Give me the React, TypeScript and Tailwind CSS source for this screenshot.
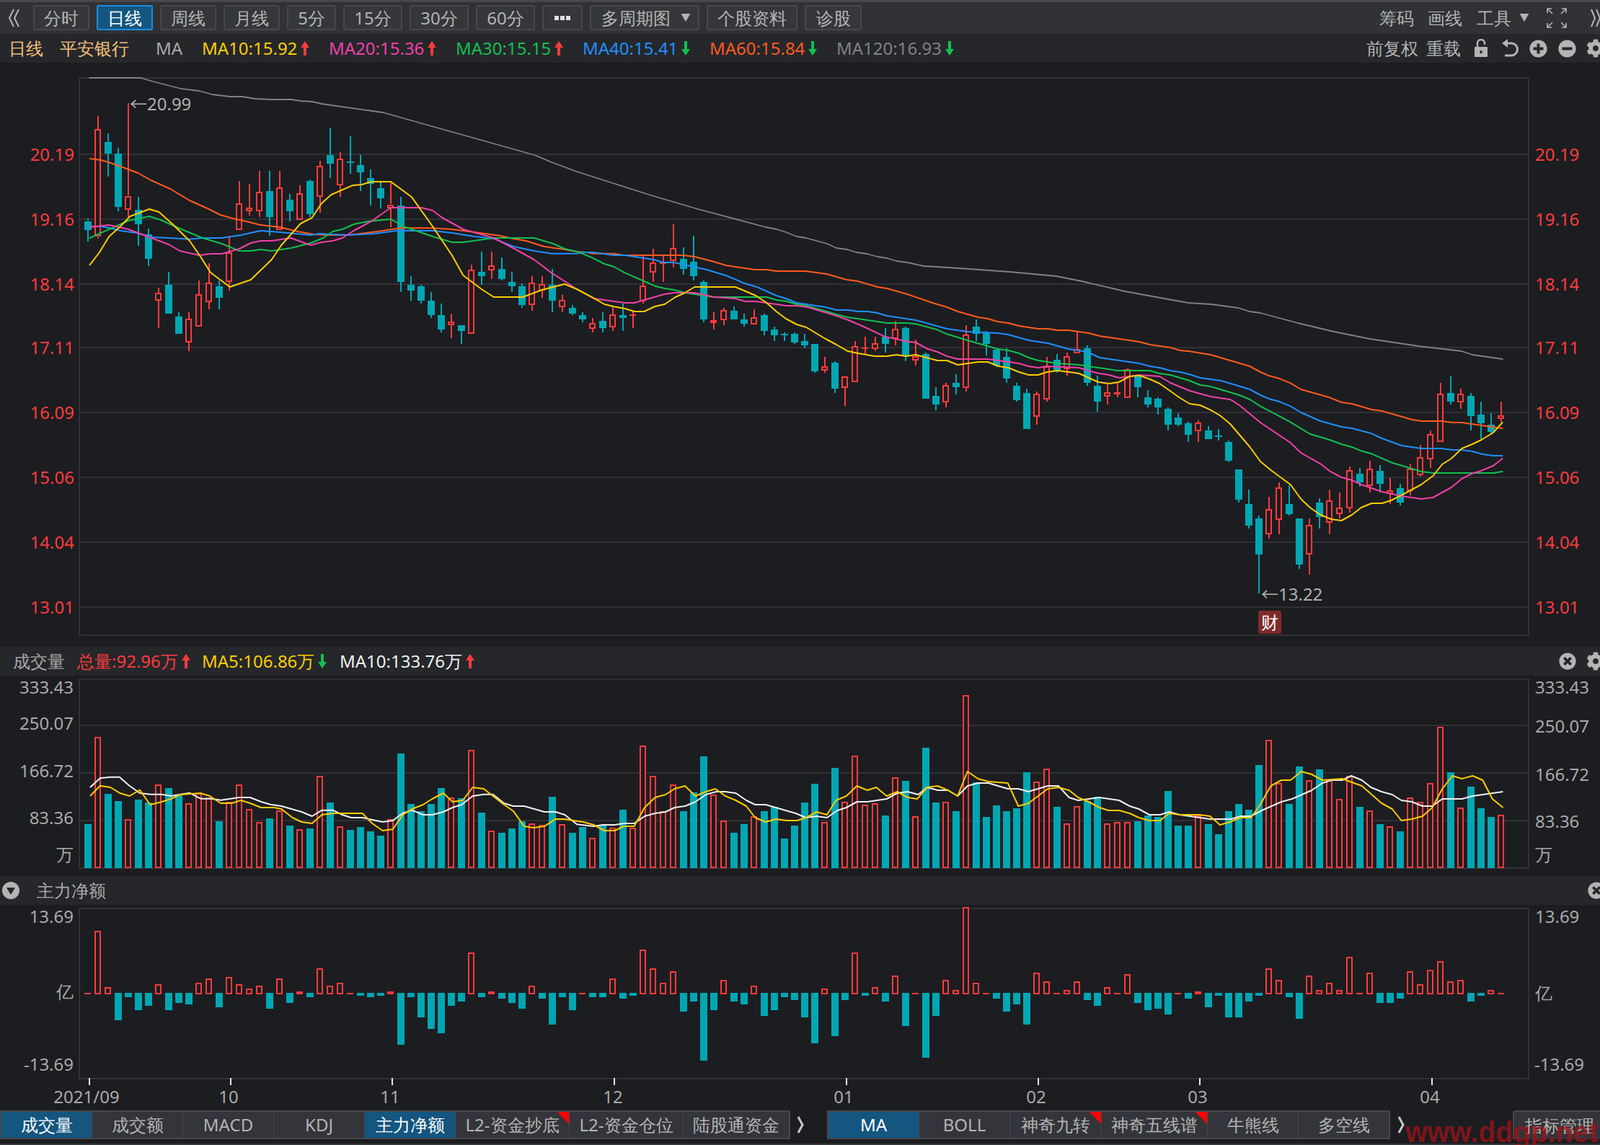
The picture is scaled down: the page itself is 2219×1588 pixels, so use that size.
import React from 'react';
import { FaCog, FaPlusCircle, FaMinusCircle, FaTimesCircle } from 'react-icons/fa';

const RED = '#ff3b3b';
const TEAL = '#00a7b3';
const BG = '#1c1d21';
const GRID = '#2f3135';
const W = 2219;

type Pt = number[];
type C = [string, number, number, number, number];

const c6: C[] = [['g',520,530,566,614],['r',94,148,596,602],['g',165,201,249,345],['g',225,249,471,489],['r',40,425,481,515],['g',430,483,543,633],['g',561,585,687,717],['r',807,827,859,975],['g',741,795,915,915],['g',909,927,999,999],['r',909,935,1033,1071],['r',777,833,967,967],['r',705,785,865,897],['g',777,801,849,897],['r',596,659,781,819],['r',363,455,565,565],['r',375,473,487,507],['r',321,407,487,513],['g',321,405,513,590],['r',321,389,565,567],['g',417,441,489,531],['r',381,413,523,523],['g',357,363,501,513],['r',279,299,427,495],['g',141,255,291,351],['r',243,269,379,429],['g',177,283,287,333],['g',255,297,327,405],['g',315,351,375,465],['g',369,393,435,477],['r',370,461,475,555],['g',429,465,783,825],['g',759,795,819,861],['g',795,801,861,873],['g',825,861,921,933],['g',873,921,981,993],['r',915,947,961,1017],['g',963,963,987,1041],['r',711,731,997,997],['g',657,741,759,795],['r',657,713,733,771],['g',681,729,771,777],['g',741,783,801,825],['g',789,801,879,891],['r',759,785,877,903],['r',759,791,817,849],['g',729,795,861,909]];
const c8: C[] = [['r',357,378,408,429],['g',399,411,435,441],['g',429,441,459,471],['r',453,474,498,513],['g',429,465,495,513],['r',408,438,492,507],['g',393,441,453,507],['r',426,437,439,495],['r',195,318,384,393],['r',165,222,264,303],['r',195,222,224,303],['r',63,162,216,243],['g',159,207,249,273],['g',111,219,279,297],['g',297,303,459,471],['r',429,462,474,501],['r',411,420,462,483],['g',405,423,459,459],['g',435,459,477,489],['r',417,450,480,480],['g',435,441,507,525],['g',489,501,525,549],['g',513,519,522,549],['g',513,519,555,561],['g',519,549,567,579],['g',561,561,675,681],['r',615,654,672,681],['g',633,639,747,765],['r',696,696,744,819],['r',549,570,720,720],['r',531,575,577,603],['r',531,558,582,591],['g',495,531,561,597],['r',465,498,540,567],['g',489,495,609,633]];
const c9: C[] = [['r',153,222,240,261],['g',207,213,399,399],['g',351,387,423,447],['r',333,342,414,435],['g',297,333,351,381],['r',93,132,354,369],['g',69,99,129,159],['g',117,123,171,219],['g',195,195,261,267],['g',189,225,315,333],['g',333,345,405,411],['g',357,375,525,525],['r',369,378,474,507],['r',225,264,402,411],['g',213,237,285,291],['r',207,222,276,303],['r',123,192,210,210],['g',177,189,333,345],['g',303,345,411,453],['r',339,372,390,423],['r',333,371,381,393],['r',273,276,396,396],['g',303,303,351,393],['g',363,393,423,435],['g',393,399,435,465],['g',435,441,507,531],['g',459,477,507,513],['g',495,501,549,579],['r',489,498,534,579],['g',513,531,567,567],['g',525,551,553,573],['g',573,579,657,663]];
const c7: C[] = [['g',513,513,639,651],['g',597,657,747,759],['g',705,717,867,1029],['r',627,677,781,801],['r',567,587,721,783],['g',579,657,699,705],['g',717,717,909,927],['r',717,743,865,951],['g',633,651,711,759],['r',597,641,733,783],['r',609,671,697,717],['r',501,515,673,693],['g',507,531,567,585],['r',477,509,581,609],['g',495,519,573,609],['r',549,599,613,657],['g',573,591,651,663],['r',489,509,603,621],['r',411,461,537,543],['r',351,365,469,507],['r',153,197,397,397],['g',123,195,231,243],['r',177,199,235,261],['g',195,207,291,351],['g',231,285,321,387],['g',279,327,357,369],['r',231,287,301,315]];

const conv = (a: C[], base: number): C[] => a.map(([c, h, t, b, l]) => [c, base + h / 3, base + t / 3, base + b / 3, base + l / 3]);
const candles: C[] = [...conv(c6, 130), ...conv(c8, 290), ...conv(c9, 420), ...conv(c7, 480)];
const cx = (i: number) => 122 + 14 * i;

const mk = (p: number[], ox: number, sx: number, oy: number): Pt[] => {
  const out: Pt[] = [];
  for (let i = 0; i < p.length; i += 2) out.push([ox + p[i] / sx, oy + p[i + 1] / 3]);
  return out;
};
const merge = (z6: number[], z8: number[], z9: number[], z7: number[]): Pt[] => [
  ...mk(z6, 100, 2.24, 130),
  ...mk(z8, 780, 3, 290).filter((q) => q[0] > 801 && q[0] < 1270),
  ...mk(z9, 1270, 3, 420).filter((q) => q[0] >= 1270 && q[0] < 1650),
  ...mk(z7, 1650, 2.756, 480).filter((q) => q[0] >= 1650),
];

const orange = merge(
  [55,270,90,276,120,288,165,310,205,330,245,360,305,396,365,444,425,480,460,504,500,519,550,534,585,546,645,555,700,573,750,585,800,588,860,588,950,573,1020,559,1120,559,1180,564,1250,576,1330,591,1370,603,1410,612,1465,635,1530,648,1568,657],
  [0,168,100,180,130,185,215,185,255,192,500,192,550,198,620,216,680,234,800,252,850,252,890,258,1010,258,1100,270,1180,293,1230,300,1310,324,1350,330,1435,354,1480,360,1500,370],
  [70,0,130,18,175,36,260,60,300,66,340,78,385,84,430,96,510,108,550,108,590,114,635,114,720,126,765,138,930,162,975,174,1060,186,1100,198,1225,216,1310,240,1390,262,1435,288,1480,306,1500,314],
  [0,22,80,36,230,84,270,108,305,124,345,136,385,154,425,180,535,214,580,234,620,240,695,264,735,270,850,306,885,312,960,312,1005,318,1040,318,1195,342],
);
const blue = merge(
  [55,552,90,552,115,558,150,570,200,579,250,597,300,600,365,605,405,600,465,600,525,588,585,570,645,576,740,588,770,582,800,585,860,588,940,582,1010,570,1120,570,1180,579,1250,594,1310,603,1370,635,1435,654,1490,665,1568,665],
  [0,186,50,186,80,180,130,180,215,192,260,192,380,210,420,222,465,222,545,240,600,252,680,276,760,310,810,324,890,360,930,372,975,390,1095,408,1140,420,1190,420,1230,426,1270,426,1310,432,1350,444,1430,456,1480,462,1500,468],
  [0,72,130,108,215,120,340,126,385,132,470,156,550,168,635,192,715,204,765,228,890,246,930,252,975,264,1015,270,1060,282,1100,288,1185,312,1270,324,1310,336,1390,358,1435,384,1480,402,1500,408],
  [0,118,40,132,120,144,230,180,270,204,305,220,345,232,385,250,425,276,500,312,580,336,620,342,695,364,735,384,810,414,885,426,960,426,1005,432,1040,432,1080,438,1120,450,1160,456,1195,456],
);
const green = merge(
  [55,600,115,564,175,528,240,510,275,525,330,558,405,600,465,624,520,654,555,654,585,648,620,654,680,642,740,622,780,600,810,573,840,564,875,543,920,531,990,522,1030,552,1120,594,1180,618,1215,618,1310,600,1435,600,1495,624,1530,645,1568,657],
  [0,160,85,186,130,205,175,228,215,240,260,265,340,300,385,320,425,330,465,336,510,348,630,366,850,366,890,378,935,384,975,396,1015,402,1100,426,1140,438,1185,450,1230,456,1350,474,1435,474,1500,486],
  [0,88,85,110,130,130,215,156,300,180,340,192,385,198,430,210,470,228,510,240,590,252,680,258,760,270,840,282,975,282,1015,294,1060,300,1140,324,1180,342,1225,348,1350,384,1390,402,1435,426,1500,462],
  [0,144,40,162,80,168,190,204,230,222,270,250,385,316,460,366,535,390,580,408,620,420,655,436,695,448,775,486,850,510,885,522,930,528,1160,528,1195,522],
);
const magenta = merge(
  [55,555,115,546,175,564,240,597,300,627,335,654,395,672,430,666,465,666,520,645,555,621,585,612,620,612,680,600,740,630,775,618,810,612,840,600,875,570,930,530,990,474,1085,474,1120,486,1150,516,1215,564,1310,600,1370,642,1435,690,1490,746,1530,780,1568,813],
  [0,290,50,330,130,372,215,384,260,390,300,390,340,378,425,354,465,348,550,348,630,366,720,372,760,384,805,384,890,396,930,402,975,402,1020,408,1100,432,1140,444,1190,462,1260,492,1340,530,1385,540,1430,550,1475,555,1500,570],
  [0,165,50,192,90,204,130,222,175,234,300,234,430,252,470,264,510,270,545,264,680,270,725,284,765,294,805,300,845,312,890,306,930,300,1015,306,1060,333,1140,366,1225,390,1310,402,1350,426,1390,462,1435,504,1500,546],
  [0,186,80,210,155,222,190,246,270,318,385,402,425,444,500,490,535,520,580,546,620,558,655,576,735,606,810,624,885,636,930,630,1000,588,1040,552,1080,530,1115,518,1160,498,1195,468],
);
const yellow = merge(
  [55,712,85,660,115,594,150,552,180,510,240,480,270,492,310,540,365,612,400,680,430,744,490,804,555,774,620,690,650,630,710,540,745,516,775,456,805,420,870,382,900,378,930,366,990,366,1055,430,1120,552,1180,672,1215,756,1275,816,1310,846,1400,846,1430,831,1460,816,1530,792,1568,813],
  [0,312,50,336,130,370,175,396,215,406,260,414,300,426,340,426,385,405,425,396,470,366,510,348,550,324,720,324,805,360,850,390,890,426,930,456,975,480,1015,492,1095,540,1140,564,1185,590,1230,600,1300,612,1350,612,1390,606,1430,612,1475,606,1500,612],
  [0,216,90,240,130,240,175,258,260,246,300,246,345,264,385,270,430,288,470,300,510,300,545,288,590,282,640,288,680,294,760,330,805,336,845,330,890,306,930,302,975,318,1015,336,1100,396,1140,420,1185,426,1225,444,1265,468,1305,504,1390,600,1435,660,1480,702,1500,714],
  [0,240,40,246,80,266,115,288,155,324,230,420,270,480,310,516,385,576,425,636,460,672,500,702,540,720,580,726,620,702,655,672,695,654,735,654,770,642,810,620,885,576,930,540,965,492,1000,468,1040,426,1080,408,1115,390,1160,360,1195,318],
);
const gray: Pt[] = [[124,108],[195,108],[212,113],[251,123],[276,126],[294,131],[319,134],[336,134],[354,137],[377,138],[404,138],[417,140],[433,141],[446,144],[531,156],[741,215],[765,225],[800,238],[850,254],[900,270],[968,290],[1062,315],[1077,318],[1090,322],[1105,328],[1118,330],[1147,338],[1160,344],[1175,346],[1188,350],[1202,352],[1217,356],[1230,358],[1243,362],[1258,364],[1281,369],[1330,372],[1400,377],[1465,383],[1500,390],[1560,404],[1620,415],[1648,420],[1680,422],[1717,427],[1733,432],[1748,434],[1770,440],[1800,448],[1850,460],[1900,470],[1967,480],[2027,487],[2042,492],[2084,498]];

const pts = (a: Pt[]) => a.map((q) => `${q[0].toFixed(1)},${q[1].toFixed(1)}`).join(' ');

const v5 = [['g',789],['r',425],['g',663],['g',693],['r',767],['g',687],['g',699],['r',623],['g',639],['g',669],['r',701],['r',659],['r',677],['g',777],['r',695],['r',623],['r',725],['r',779],['g',765],['r',731],['g',795],['r',809],['g',807],['r',587],['g',699],['r',797],['g',813],['g',801],['g',819],['g',837],['r',767],['g',495],['g',705],['g',735],['g',705],['g',639],['r',677],['g',681],['r',479],['g',741],['r',815],['g',825],['g',807],['g',777],['r',785],['r',791],['g',675]] as [string, number][];
const v10 = [['r',580],['g',615],['g',591],['r',635],['g',585],['r',593],['g',519],['r',593],['r',251],['r',377],['r',525],['r',413],['g',525],['g',447],['g',297],['r',455],['r',563],['g',615],['g',579],['r',545],['g',525],['g',507],['g',639],['g',585],['g',489],['g',411],['r',569],['g',345],['r',485],['r',293],['r',497],['r',491],['g',543],['r',383],['g',399],['r',545],['g',261],['g',489],['r',485],['g',525],['r',41],['g',405],['g',549],['g',501],['g',525],['g',513],['g',363]] as [string, number][];
const v11 = [['r',401],['r',347],['g',507],['r',575],['r',503],['g',483],['g',465],['r',575],['r',569],['r',569],['g',567],['g',543],['g',549],['g',441],['g',585],['g',585],['r',543],['g',579],['g',621],['g',525],['g',495],['g',519],['g',333],['r',227],['r',407],['g',495],['g',339],['r',395],['g',351],['r',395],['r',473],['r',377],['g',507],['r',521],['g',579],['r',587],['g',609],['r',467],['r',485],['r',407],['r',173],['g',363],['r',509],['g',423],['g',513],['g',549],['r',539]] as [string, number][];
const volBars: [string, number][] = [
  ...v5.map(([c, y]) => [c, 880 + y / 3] as [string, number]),
  ...v10.map(([c, y]) => [c, 950 + y / 3] as [string, number]),
  ...v11.map(([c, y]) => [c, 950 + y / 3] as [string, number]),
];

const vw = [
  ...mk([245,636,272,598,300,593,325,593,350,627,380,660,410,665,440,665,465,672,515,659,545,683,575,683,600,689,650,678,680,678,710,696,735,707,765,714,820,738,848,756,875,731,905,731,930,750,955,762,985,762,1040,780,1068,774,1095,743,1120,731,1150,750,1175,750,1205,738,1230,720,1255,708,1285,672,1315,665,1340,665,1370,702,1395,714,1425,714,1480,738,1510,738,1535,750,1568,790], 0, 1.96, 880),
  ...mk([105,588,135,582,175,582,205,576,240,576,275,546,310,534,345,528,375,510,410,504,445,486,480,456,515,444,545,444,580,450,615,480,645,498,680,498,780,534,815,552,850,546,885,552,920,522,950,510,985,486,1020,486,1085,474,1120,450,1155,444,1190,456,1220,426,1255,438,1290,438,1322,462,1355,420,1390,408,1425,408,1490,432,1525,432,1560,444], 780, 2.412, 950),
  ...mk([0,440,55,420,90,420,125,468,155,480,225,468,290,480,325,504,355,516,390,540,425,540,455,528,490,540,590,558,660,558,690,546,725,546,760,522,825,486,860,474,925,438,960,408,990,396,1025,396,1055,378,1090,396,1120,426,1155,444,1190,456,1220,480,1255,486,1290,504,1322,504,1355,474,1420,474,1455,462,1555,444], 1430, 2.376, 950),
];
const vy = [
  ...mk([245,672,272,629,300,636,325,659,352,672,380,647,408,708,435,698,465,684,490,666,545,660,570,672,600,702,630,702,655,690,680,702,710,720,745,720,765,726,795,762,820,780,848,786,875,750,905,744,985,744,1012,786,1040,816,1068,810,1095,750,1120,726,1150,708,1175,684,1205,660,1230,696,1258,690,1285,636,1315,642,1340,672,1370,708,1395,734,1425,798,1450,804,1480,798,1510,768,1535,768,1568,776], 0, 1.96, 880),
  ...mk([70,570,105,582,140,606,175,606,205,588,240,588,275,510,310,468,345,456,375,432,410,420,445,462,480,444,512,432,545,462,580,480,615,504,645,552,680,570,715,558,750,564,785,564,815,552,850,528,885,540,915,480,950,462,985,420,1020,438,1050,426,1085,462,1120,444,1155,468,1187,474,1220,426,1255,420,1290,438,1322,462,1355,360,1390,390,1425,402,1490,408,1525,504,1560,492], 780, 2.412, 950),
  ...mk([0,484,55,432,90,426,125,438,155,468,190,486,225,510,255,522,290,522,325,534,355,552,390,564,425,564,455,534,490,540,555,540,590,546,622,582,655,570,690,552,725,552,755,498,790,420,825,396,855,396,890,360,925,372,960,396,1025,390,1090,420,1155,492,1190,516,1220,564,1255,558,1290,546,1322,510,1355,432,1388,378,1420,390,1455,378,1488,396,1520,474,1555,510], 1430, 2.376, 950),
];

// net flow: positive numbers = red top, negative sign = teal bottom (zoom y)
const net = [366,108,342,-480,-384,-438,-420,330,-438,-408,-414,324,306,-426,300,330,348,336,-432,306,-408,360,-384,264,336,324,366,-378,-384,-378,360,-582,-384,-468,-516,-534,-420,-402,198,-384,360,-390,-408,-432,336,-390,-498,-384,-438,366,-384,-384,306,-390,-378,186,264,324,276,-444,-402,-648,-438,312,-402,-414,336,-462,-438,-384,-396,-468,-576,348,-546,-396,198,-378,342,-402,294,-504,366,-636,-462,312,354,10,324,366,-390,-444,-414,-498,282,318,366,354,318,-396,-420,342,366,288,-408,-438,-432,-456,366,-390,360,-426,-378,-468,-468,-402,-378,264,312,-384,-474,294,354,324,354,216,366,282,-408,-408,-390,276,330,270,234,318,312,-402,-378,354,366];

const Grid = ({ ys, top, bottom }: { ys: number[]; top: number; bottom: number }) => (
  <g shapeRendering="crispEdges">
    {ys.map((y) => <rect key={y} x={110} y={y - 1} width={2010} height={2} fill={GRID} />)}
    <rect x={110} y={top - 1} width={2010} height={2} fill={GRID} />
    <rect x={110} y={bottom - 1} width={2010} height={2} fill={GRID} />
    <rect x={109} y={top - 1} width={2} height={bottom - top + 2} fill={GRID} />
    <rect x={2119} y={top - 1} width={2} height={bottom - top + 2} fill={GRID} />
  </g>
);

const Hollow = ({ x, y, h }: { x: number; y: number; h: number }) => (
  <rect x={x - 4} y={y + 1} width={7} height={Math.max(h - 2, 0.1)} fill={BG} stroke={RED} strokeWidth={2} shapeRendering="crispEdges" />
);

const Label = ({ x, y, t, c = '#a9a9a9', end }: { x: number; y: number; t: string; c?: string; end?: boolean }) => (
  <text x={x} y={y + 8.5} fontSize={24} fill={c} textAnchor={end ? 'end' : 'start'}>{t}</text>
);

const MainChart = () => {
  const ys = [214, 304, 394, 482, 572, 662, 752, 842];
  const lab = ['20.19', '19.16', '18.14', '17.11', '16.09', '15.06', '14.04', '13.01'];
  return (
    <svg width={W} height={810} viewBox="0 87 2219 810" className="block shrink-0">
      <Grid ys={ys} top={108} bottom={881} />
      {ys.map((y, i) => (
        <g key={y}>
          <Label x={103} y={y} t={lab[i]} c={RED} end />
          <Label x={2129} y={y} t={lab[i]} c={RED} />
        </g>
      ))}
      {candles.map(([c, h, t, b, l], i) => {
        const x = cx(i);
        const col = c === 'r' ? RED : TEAL;
        return (
          <g key={i} shapeRendering="crispEdges">
            <rect x={x - 1} y={Math.round(h)} width={2} height={Math.max(Math.round(t - h), 0)} fill={col} />
            <rect x={x - 1} y={Math.round(b)} width={2} height={Math.max(Math.round(l - b), 0)} fill={col} />
            {c === 'r'
              ? <Hollow x={x} y={Math.round(t)} h={Math.max(Math.round(b - t), 2)} />
              : <rect x={x - 5} y={Math.round(t)} width={10} height={Math.max(Math.round(b - t), 2)} fill={col} />}
          </g>
        );
      })}
      <g fill="none" strokeLinejoin="round" strokeLinecap="round">
        <polyline points={pts(gray)} stroke="#808184" strokeWidth={1.8} />
        <polyline points={pts(orange)} stroke="#ff5a1f" strokeWidth={2} />
        <polyline points={pts(blue)} stroke="#1e90ff" strokeWidth={2} />
        <polyline points={pts(green)} stroke="#12c04f" strokeWidth={2} />
        <polyline points={pts(magenta)} stroke="#f040a8" strokeWidth={2} />
        <polyline points={pts(yellow)} stroke="#ffcc00" strokeWidth={2} />
      </g>
      <text x={180} y={153} fontSize={24} fill="#b0b0b0"><tspan fontFamily="Noto Sans CJK SC">←</tspan>20.99</text>
      <text x={1749} y={833} fontSize={24} fill="#b0b0b0"><tspan fontFamily="Noto Sans CJK SC">←</tspan>13.22</text>
      <rect x={1745} y={847} width={32} height={32} rx={3} fill="#7f2a2a" />
      <text x={1761} y={872} fontSize={24} fill="#ffffff" textAnchor="middle">财</text>
    </svg>
  );
};

const VolChart = () => (
  <svg width={W} height={278} viewBox="0 937 2219 278" className="block shrink-0">
    <Grid ys={[1006, 1072, 1138]} top={942} bottom={1204} />
    {volBars.map(([c, y], i) => {
      const x = cx(i);
      const top = Math.round(y);
      return c === 'r'
        ? <Hollow key={i} x={x} y={top} h={1204 - top} />
        : <rect key={i} x={x - 5} y={top} width={10} height={1204 - top} fill={TEAL} shapeRendering="crispEdges" />;
    })}
    <g fill="none" strokeLinejoin="round">
      <polyline points={pts(vw)} stroke="#f0f0f0" strokeWidth={2} />
      <polyline points={pts(vy)} stroke="#ffcc00" strokeWidth={2} />
    </g>
    <Label x={102} y={953} t="333.43" end />
    <Label x={102} y={1003} t="250.07" end />
    <Label x={102} y={1069} t="166.72" end />
    <Label x={102} y={1134} t="83.36" end />
    <Label x={102} y={1185} t="万" end />
    <Label x={2129} y={953} t="333.43" />
    <Label x={2129} y={1007} t="250.07" />
    <Label x={2129} y={1074} t="166.72" />
    <Label x={2129} y={1139} t="83.36" />
    <Label x={2129} y={1185} t="万" />
  </svg>
);

const NetChart = () => {
  const ticks: [number, number, string][] = [[123, 120, '2021/09'], [319, 317, '10'], [543, 541, '11'], [851, 850, '12'], [1173, 1170, '01'], [1439, 1437, '02'], [1663, 1661, '03'], [1985, 1983, '04']];
  return (
    <svg width={W} height={285} viewBox="0 1255 2219 285" className="block shrink-0">
      <Grid ys={[]} top={1260} bottom={1496} />
      {net.map((v, i) => {
        const x = cx(i);
        if (v < 0) return <rect key={i} x={x - 5} y={1377} width={10} height={Math.round(1255 - v / 3) - 1377} fill={TEAL} shapeRendering="crispEdges" />;
        const top = Math.round(1255 + v / 3);
        return <Hollow key={i} x={x} y={top} h={1379 - top} />;
      })}
      {ticks.map(([tx, lx, t]) => (
        <g key={t}>
          <rect x={tx} y={1495} width={2} height={10} fill="#e8e8e8" shapeRendering="crispEdges" />
          <text x={lx} y={1530} fontSize={24} fill="#a9a9a9" textAnchor="middle">{t}</text>
        </g>
      ))}
      <Label x={102} y={1271} t="13.69" end />
      <Label x={102} y={1375} t="亿" end />
      <Label x={102} y={1476} t="-13.69" end />
      <Label x={2129} y={1271} t="13.69" />
      <Label x={2129} y={1377} t="亿" />
      <Label x={2128} y={1476} t="-13.69" />
    </svg>
  );
};

const Up = () => (
  <svg width={12} height={20} viewBox="0 0 12 20" className="shrink-0"><polygon points="6,0 12,9 8,9 8,20 4,20 4,9 0,9" fill={RED} /></svg>
);
const Down = () => (
  <svg width={12} height={20} viewBox="0 0 12 20" className="shrink-0"><polygon points="6,20 12,11 8,11 8,0 4,0 4,11 0,11" fill="#12c04f" /></svg>
);

const Tool = ({ w, active, children }: { w: string; active?: boolean; children: React.ReactNode }) => (
  <div className={`${w} h-[35px] shrink-0 flex items-center justify-center rounded-[3px] border-2 ${active ? 'bg-[#14567f] border-[#1a8ee0] text-white' : 'bg-[#35373b] border-[#46484c] text-[#b4b4b4]'}`}>{children}</div>
);

const Chevrons = ({ left }: { left?: boolean }) => (
  <svg width={17} height={26} viewBox="0 0 17 26" className="shrink-0" fill="none" stroke="#b4b4b4" strokeWidth={2}>
    {left
      ? <path d="M8 1 L2 13 L8 25 M15 1 L9 13 L15 25" />
      : <path d="M2 1 L8 13 L2 25 M9 1 L15 13 L9 25" />}
  </svg>
);

const Tri = () => (
  <svg width={14} height={11} viewBox="0 0 14 12" className="shrink-0"><polygon points="0,0 14,0 7,12" fill="#b4b4b4" /></svg>
);

const MaItem = ({ c, t, up, w }: { c: string; t: string; up: boolean; w: string }) => (
  <div className={`${w} shrink-0 flex items-center gap-[5px] ${c}`}>
    <span>{t}</span>
    {up ? <Up /> : <Down />}
  </div>
);

const Tab = ({ w, active, flag, children }: { w: string; active?: boolean; flag?: boolean; children: React.ReactNode }) => (
  <div className={`relative ${w} h-[36px] shrink-0 flex items-center justify-center ${active ? 'bg-[#14567f] text-white' : 'bg-[#33353a] text-[#b4b4b4]'}`}>
    {children}
    {flag && <svg width={16} height={17} viewBox="0 0 16 17" className="absolute top-0 right-0"><polygon points="0,0 16,0 16,17" fill="#ff0000" /></svg>}
  </div>
);

const TabChevron = () => (
  <svg width={10} height={24} viewBox="0 0 10 24" fill="none" stroke="#c8c8c8" strokeWidth={3} className="shrink-0"><path d="M2 1 L8 12 L2 23" /></svg>
);

export default function App() {
  return (
    <div className="relative w-[2219px] h-[1588px] overflow-hidden flex flex-col bg-[#1c1d21] text-[24px] leading-none text-[#b4b4b4] font-['Noto_Sans','Noto_Sans_CJK_SC',sans-serif]">
      <div className="h-[3px] shrink-0 bg-[#46484c]" />
      <div className="h-[44px] shrink-0 bg-[#303236] flex items-start pt-[4px] pl-[11px]">
        <div className="h-[35px] flex items-center"><Chevrons left /></div>
        <div className="ml-[18px] flex gap-[10px]">
          <Tool w="w-[78px]">分时</Tool>
          <Tool w="w-[78px]" active>日线</Tool>
          <Tool w="w-[78px]">周线</Tool>
          <Tool w="w-[78px]">月线</Tool>
          <Tool w="w-[68px]">5分</Tool>
          <Tool w="w-[82px]">15分</Tool>
          <Tool w="w-[82px]">30分</Tool>
          <Tool w="w-[82px]">60分</Tool>
          <Tool w="w-[56px]">
            <div className="flex gap-[2px]">
              <div className="w-[6px] h-[6px] bg-[#e0e0e0]" />
              <div className="w-[6px] h-[6px] bg-[#e0e0e0]" />
              <div className="w-[6px] h-[6px] bg-[#e0e0e0]" />
            </div>
          </Tool>
          <Tool w="w-[152px]"><span className="ml-[4px]">多周期图</span><span className="ml-[14px]"><Tri /></span></Tool>
          <Tool w="w-[126px]">个股资料</Tool>
          <Tool w="w-[79px]">诊股</Tool>
        </div>
        <div className="ml-auto h-[35px] flex items-center">
          <span>筹码</span>
          <span className="ml-[19px]">画线</span>
          <span className="ml-[20px]">工具</span>
          <span className="ml-[11px]"><Tri /></span>
          <svg width={28} height={28} viewBox="0 0 28 28" fill="none" stroke="#b4b4b4" strokeWidth={1.6} className="ml-[24px] shrink-0">
            <path d="M1 7 V1 H7 M1 1 L8 8 M27 7 V1 H21 M27 1 L20 8 M1 21 V27 H7 M1 27 L8 20 M27 21 V27 H21 M27 27 L20 20" />
          </svg>
          <span className="ml-[33px]"><svg width={13} height={26} viewBox="0 0 13 26" fill="none" stroke="#b4b4b4" strokeWidth={2} className="block"><path d="M1 1 L6 13 L1 25 M8 1 L13 13 L8 25" /></svg></span>
        </div>
      </div>

      <div className="h-[40px] shrink-0 bg-[#25272b] flex items-center pl-[12px]">
        <span className="text-[#f2c078]">日线</span>
        <span className="ml-[23px] text-[#f2c078]">平安银行</span>
        <span className="ml-[37px] w-[64px] shrink-0 text-[#a9a9a9]">MA</span>
        <MaItem w="w-[176px]" c="text-[#ffcc00]" t="MA10:15.92" up />
        <MaItem w="w-[176px]" c="text-[#f040a8]" t="MA20:15.36" up />
        <MaItem w="w-[176px]" c="text-[#12c04f]" t="MA30:15.15" up />
        <MaItem w="w-[176px]" c="text-[#1e90ff]" t="MA40:15.41" up={false} />
        <MaItem w="w-[176px]" c="text-[#ff5a1f]" t="MA60:15.84" up={false} />
        <MaItem w="w-[170px]" c="text-[#808184]" t="MA120:16.93" up={false} />
        <div className="ml-auto mr-[-7px] flex items-center">
          <span>前复权</span>
          <span className="ml-[11px]">重载</span>
          <svg width={22} height={26} viewBox="0 0 22 26" className="ml-[17px] shrink-0">
            <path d="M6 11 V6 a5 5 0 0 1 10 0 V8" fill="none" stroke="#b4b4b4" strokeWidth={2.5} />
            <rect x={2} y={11} width={18} height={14} rx={1} fill="#b4b4b4" />
            <rect x={9.5} y={16} width={3} height={4} fill="#25272b" />
          </svg>
          <svg width={25} height={26} viewBox="0 0 25 26" fill="none" className="ml-[17px] shrink-0">
            <path d="M7 6 H14 a8.5 8.5 0 0 1 0 17 H5" stroke="#b4b4b4" strokeWidth={3} />
            <polygon points="1,6 9,0 9,12" fill="#b4b4b4" />
          </svg>
          <FaPlusCircle size={25} color="#b4b4b4" className="ml-[14px] shrink-0" />
          <FaMinusCircle size={25} color="#b4b4b4" className="ml-[15px] shrink-0" />
          <FaCog size={26} color="#b4b4b4" className="ml-[14px] shrink-0" />
        </div>
      </div>

      <MainChart />

      <div className="h-[40px] shrink-0 bg-[#25272b] flex items-center pl-[18px]">
        <span className="w-[89px] shrink-0 text-[#a9a9a9]">成交量</span>
        <MaItem w="w-[173px]" c="text-[#ff3b3b]" t="总量:92.96万" up />
        <MaItem w="w-[191px]" c="text-[#ffcc00]" t="MA5:106.86万" up={false} />
        <MaItem w="w-[200px]" c="text-[#f0f0f0]" t="MA10:133.76万" up />
        <div className="ml-auto mr-[-7px] flex items-center">
          <FaTimesCircle size={24} color="#b4b4b4" className="shrink-0" />
          <FaCog size={26} color="#b4b4b4" className="ml-[14px] shrink-0" />
        </div>
      </div>

      <VolChart />

      <div className="h-[40px] shrink-0 bg-[#25272b] flex items-center pl-[3px]">
        <svg width={24} height={24} viewBox="0 0 24 24" className="shrink-0">
          <circle cx={12} cy={12} r={12} fill="#b4b4b4" />
          <polygon points="6,8 18,8 12,18" fill="#25272b" />
        </svg>
        <span className="ml-[24px] text-[#a9a9a9]">主力净额</span>
        <div className="ml-auto mr-[-7px]"><FaTimesCircle size={24} color="#b4b4b4" /></div>
      </div>

      <NetChart />

      <div className="h-[40px] shrink-0 flex items-stretch">
        <div className="flex gap-[1px] bg-[#46484c] p-[2px]">
          <Tab w="w-[125px]" active>成交量</Tab>
          <Tab w="w-[125px]">成交额</Tab>
          <Tab w="w-[125px]">MACD</Tab>
          <Tab w="w-[125px]">KDJ</Tab>
          <Tab w="w-[125px]" active>主力净额</Tab>
          <Tab w="w-[157px]" flag>L2-资金抄底</Tab>
          <Tab w="w-[157px]">L2-资金仓位</Tab>
          <Tab w="w-[146px]">陆股通资金</Tab>
        </div>
        <div className="ml-[9px] flex items-center"><TabChevron /></div>
        <div className="ml-[32px] flex gap-[1px] bg-[#46484c] p-[2px]">
          <Tab w="w-[125px]" active>MA</Tab>
          <Tab w="w-[125px]">BOLL</Tab>
          <Tab w="w-[126px]" flag>神奇九转</Tab>
          <Tab w="w-[146px]" flag>神奇五线谱</Tab>
          <Tab w="w-[125px]">牛熊线</Tab>
          <Tab w="w-[125px]">多空线</Tab>
        </div>
        <div className="ml-[10px] flex items-center"><TabChevron /></div>
        <div className="ml-auto w-[121px] shrink-0 bg-[#33353a] border-t-2 border-l-2 border-[#46484c] rounded-tl-[4px] flex items-center pl-[15px] whitespace-nowrap">指标管理</div>
      </div>
      <div className="h-[6px] shrink-0" />
      <div className="h-[2px] shrink-0 bg-[#35373b]" />

      <svg width={269} height={40} viewBox="0 0 269 40" className="absolute left-[1949px] top-[1548px]">
        <text x={0} y={36} fontSize={40} fontWeight={700} fontFamily="Liberation Sans, Arial, sans-serif" fill="rgba(165,18,22,0.72)" textLength={267} lengthAdjust="spacingAndGlyphs">www.ddgp.net</text>
      </svg>
    </div>
  );
}
